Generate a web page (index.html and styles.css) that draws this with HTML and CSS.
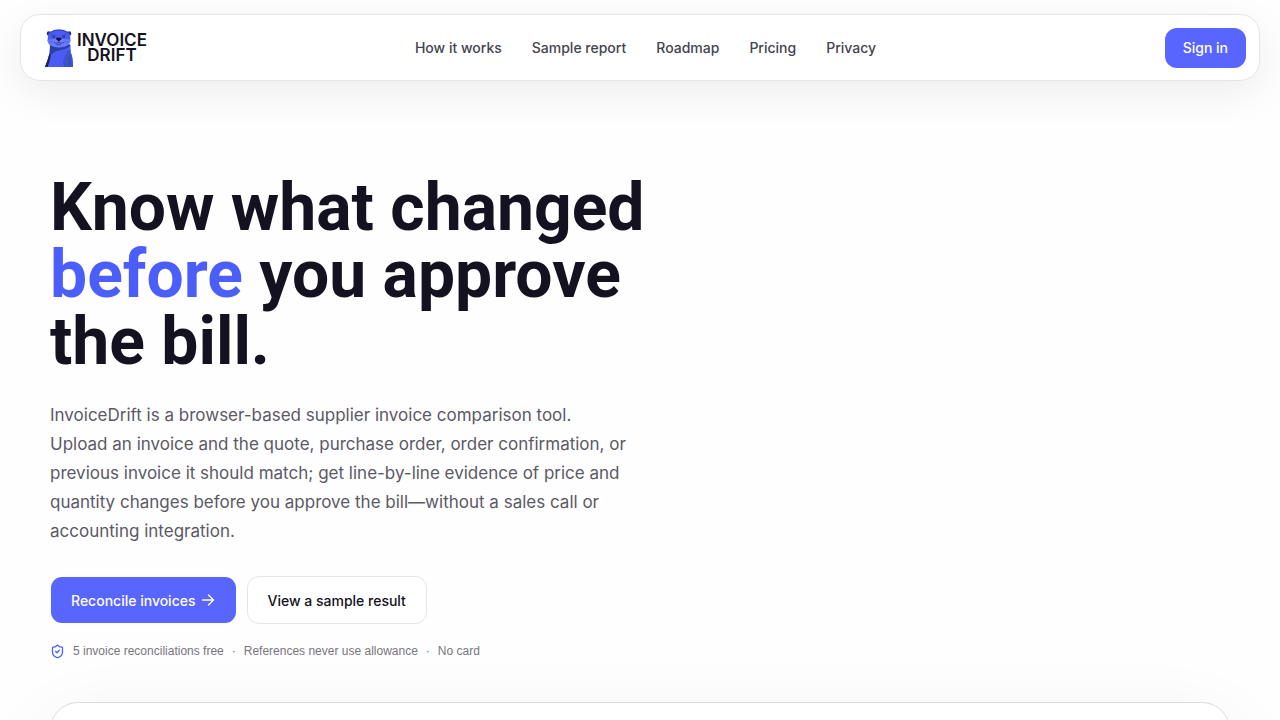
FILE: index.html
```
<!DOCTYPE html>
<html lang="en">
<head>
    <meta charset="UTF-8">
    <meta name="viewport" content="width=device-width, initial-scale=1.0">
    <title>InvoiceDrift</title>
    <link rel="stylesheet" href="styles.css">
</head>
<body>
    <header class="site-header">
        <a class="logo" href="#" aria-label="InvoiceDrift home">
            <svg class="logo-mark" viewBox="0 0 28 38" aria-hidden="true">
                <path d="M5 16 L4.500 24 Q3 30 0 38 H28 Q28 28 25.500 23 V16 Z" fill="#4b5cf5"/>
                <path d="M5 19 L4.800 24 Q3 31 0 38 H2.500 Q5 32 6 26 Q9 22 16 21 Q23 20 25.500 16 L24 15 Q14 22 5 16 Z" fill="#2a3ea6"/>
                <path d="M0 38 Q3 31 4.500 25 L5.500 26 Q5 32 2.500 38 Z" fill="#1c2450"/>
                <path d="M25.500 20 Q19 24 19 31 L20 38 H28 Q28 28 25.500 23 Z" fill="#3d55c9"/>
                <path d="M24 28 L25 37.500 M18.500 32 L19.500 37.500" stroke="#2a3ea6" stroke-width=".7" fill="none"/>
                <circle cx="4" cy="4.500" r="2.300" fill="#252f71"/>
                <circle cx="24" cy="4.500" r="2.300" fill="#252f71"/>
                <path d="M3 6 Q5 .5 14 .5 Q23 .5 25 6 L25.500 12 Q24 18.500 14 18.500 Q4 18.500 2.500 12 Z" fill="#4b5cf5"/>
                <path d="M2.700 11 Q6 10 10 10 L14 11 L18 10 Q22 10 25.300 11 L25 13 Q23 18 14 18 Q5 18 3 13 Z" fill="#6a7cff"/>
                <path d="M5 4 Q8 1 14 1 Q20 1 23 4" stroke="#2c3b9c" stroke-width=".8" fill="none"/>
                <path d="M6 5.500 L10.500 7 M21.500 5.500 L17 7" stroke="#2c3b9c" stroke-width=".8"/>
                <path d="M7.500 8 H10 M17.500 8 H20" stroke="#18245f" stroke-width="1.200"/>
                <path d="M11 8.700 H16.500 L16 10.500 L13.800 12.500 L11.500 10.500 Z" fill="#14162b"/>
                <path d="M13.800 12 V13.500 M8.500 13 Q10.500 15.500 13.800 13.500 Q17 15.500 19.500 13 M11.500 15.700 H16" stroke="#202e7c" stroke-width=".7" fill="none"/>
                <path d="M4 12 L8 12.500 M4.500 14 L7 14 M24 12 L20 12.500 M23.500 14 L21 14" stroke="#4054c8" stroke-width=".5"/>
            </svg>
            <span class="logo-text">INVOICE<br>DRIFT</span>
        </a>
        <nav class="site-nav" aria-label="Main">
            <a href="#how">How it works</a>
            <a href="#sample">Sample report</a>
            <a href="#roadmap">Roadmap</a>
            <a href="#pricing">Pricing</a>
            <a href="#privacy">Privacy</a>
        </nav>
        <a class="sign-in" href="#signin">Sign in</a>
    </header>

    <main class="hero">
        <div class="hero-copy">
            <h1>Know what changed <span class="accent">before</span> you approve the&nbsp;bill.</h1>
            <p class="lead">InvoiceDrift is a browser-based supplier invoice comparison tool.<br>Upload an invoice and the quote, purchase order, order confirmation, or previous invoice it should match; get line-by-line evidence of price and quantity changes before you approve the bill—without a sales call or accounting integration.</p>
            <div class="actions">
                <a class="btn btn-primary" href="#reconcile">Reconcile invoices
                    <svg class="arrow" viewBox="0 0 16 16" aria-hidden="true"><path d="M2.500 8 H13.500 M8.500 3 L13.500 8 L8.500 13"/></svg>
                </a>
                <a class="btn btn-secondary" href="#sample">View a sample result</a>
            </div>
            <p class="note">
                <svg class="shield" viewBox="0 0 24 24" aria-hidden="true"><path d="M20 13c0 5-3.500 7.500-7.660 8.950a1 1 0 0 1-.67-.01C7.500 20.500 4 18 4 13V6a1 1 0 0 1 1-1c2 0 4.500-1.200 6.240-2.720a1.170 1.170 0 0 1 1.520 0C14.510 3.810 17 5 19 5a1 1 0 0 1 1 1z"/><path d="m9 12 2 2 4-4"/></svg>
                <span>5 invoice reconciliations free</span>
                <span>·</span>
                <span>References never use allowance</span>
                <span>·</span>
                <span>No card</span>
            </p>
        </div>
        <section class="preview" id="sample" aria-label="Sample report"></section>
    </main>
</body>
</html>
```

FILE: styles.css
```
* {
    box-sizing: border-box;
}
body {
    margin: 0;
    background-color: #fefefe;
    color: #141221;
    font-family: Inter, "Liberation Sans", sans-serif;
}
a {
    color: inherit;
    text-decoration: none;
}

/* Header */
.site-header {
    display: grid;
    grid-template-columns: 1fr auto 1fr;
    align-items: center;
    min-height: 67px;
    margin: 14px 20px 0;
    padding: 0 13px 0 24px;
    background-color: #fff;
    border: 1px solid #e5e5e7;
    border-radius: 20px;
    box-shadow: 0 12px 40px rgba(0, 0, 0, 0.07);
}
.logo {
    display: flex;
    align-items: center;
    gap: 4px;
}
.logo-mark {
    width: 28px;
    height: 38px;
}
.logo-text {
    font-size: 17px;
    font-weight: 600;
    line-height: 15px;
    text-align: center;
}
.site-nav {
    display: flex;
    gap: 30px;
    font-size: 14px;
    font-weight: 500;
    color: #45434f;
}
.sign-in {
    justify-self: end;
    padding: 0 18px;
    border-radius: 12px;
    background-color: #5965ff;
    color: #fff;
    font-size: 14px;
    font-weight: 500;
    line-height: 40px;
}

/* Hero */
.hero {
    padding: 93px 50px 0;
}
.hero-copy {
    max-width: 610px;
}
h1 {
    margin: 0;
    font-family: Roboto, "Liberation Sans", sans-serif;
    font-size: 66px;
    font-weight: 700;
    line-height: 67px;
}
.accent {
    color: #4c5efa;
}
.lead {
    max-width: 584px;
    margin: 26px 0 0;
    color: #5b5966;
    font-size: 17px;
    line-height: 29px;
}
.actions {
    display: flex;
    gap: 10px;
    margin-top: 30px;
}
.btn {
    display: flex;
    align-items: center;
    gap: 4px;
    height: 48px;
    padding: 0 20px;
    border: 1px solid transparent;
    border-radius: 12px;
    font-size: 14px;
    font-weight: 500;
}
.btn-primary {
    background-color: #5965ff;
    background-clip: padding-box;
    color: #fff;
}
.btn-secondary {
    background-color: #fff;
    border-color: #e5e5e7;
}
.arrow {
    width: 16px;
    height: 16px;
    fill: none;
    stroke: currentColor;
    stroke-width: 1.3;
    stroke-linecap: round;
    stroke-linejoin: round;
}
.note {
    display: flex;
    align-items: center;
    gap: 8px;
    margin: 18px 0 0;
    color: #777580;
    font-family: "Liberation Sans", Arial, sans-serif;
    font-size: 12px;
    line-height: 18px;
}
.shield {
    width: 15px;
    height: 15px;
    fill: none;
    stroke: #4c5efa;
    stroke-width: 2;
    stroke-linecap: round;
    stroke-linejoin: round;
}

/* Report preview */
.preview {
    min-height: 400px;
    margin-top: 42px;
    background-color: #fff;
    border: 1px solid #dcdce4;
    border-radius: 28px;
    box-shadow: 0 24px 80px rgba(0, 0, 0, 0.07);
}
```
